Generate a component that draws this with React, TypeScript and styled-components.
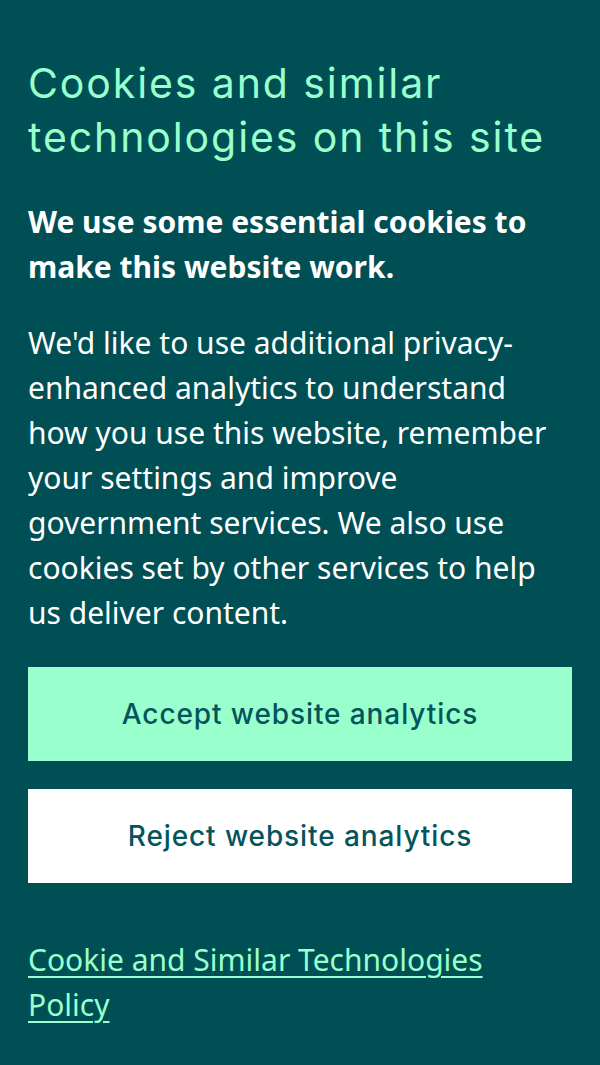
import React from "react";
import styled, { createGlobalStyle } from "styled-components";

const GlobalStyle = createGlobalStyle`
  html, body {
    margin: 0;
    padding: 0;
    background: #004f55;
  }
`;

const Banner = styled.section`
  box-sizing: border-box;
  min-height: 1065px;
  padding: 56px 28px 40px;
  background: #004f55;
  color: #ffffff;
  font-family: "Noto Sans", "Open Sans", sans-serif;
`;

const Title = styled.h2`
  margin: 0 0 35px;
  font-family: Inter, Roboto, "Liberation Sans", sans-serif;
  font-size: 41px;
  font-weight: 400;
  letter-spacing: 1.9px;
  line-height: 54px;
  color: #99ffcc;
`;

const Text = styled.p<{ $strong?: boolean }>`
  margin: 0 0 31px;
  font-size: 30px;
  line-height: 45px;
  font-weight: ${(p) => (p.$strong ? 700 : 400)};
  color: #ffffff;
`;

const Actions = styled.div`
  display: flex;
  flex-direction: column;
  gap: 28px;
  margin-top: 32px;
`;

const Button = styled.button<{ $primary?: boolean }>`
  height: 94px;
  width: 100%;
  border: none;
  border-radius: 0;
  cursor: pointer;
  background: ${(p) => (p.$primary ? "#99ffcc" : "#ffffff")};
  color: #04545c;
  font-family: Inter, Roboto, "Liberation Sans", sans-serif;
  font-size: 28px;
  font-weight: 500;
  letter-spacing: 0.9px;
`;

const Footer = styled.p`
  max-width: 500px;
  margin: 54px 0 0;
  font-size: 30px;
  line-height: 45px;
`;

const PolicyLink = styled.a`
  color: #99ffcc;
  text-decoration: underline;
  text-underline-offset: 5px;
  text-decoration-thickness: 2px;
`;

export default function App() {
  return (
    <>
      <GlobalStyle />
      <Banner>
        <Title>Cookies and similar technologies on this site</Title>
        <Text $strong>We use some essential cookies to make this website work.</Text>
        <Text>
          We'd like to use additional privacy-enhanced analytics to understand
          how you use this website, remember your settings and improve
          government services. We also use cookies set by other services to
          help us deliver content.
        </Text>
        <Actions>
          <Button $primary type="button">
            Accept website analytics
          </Button>
          <Button type="button">Reject website analytics</Button>
        </Actions>
        <Footer>
          <PolicyLink href="#">Cookie and Similar Technologies Policy</PolicyLink>
        </Footer>
      </Banner>
    </>
  );
}
